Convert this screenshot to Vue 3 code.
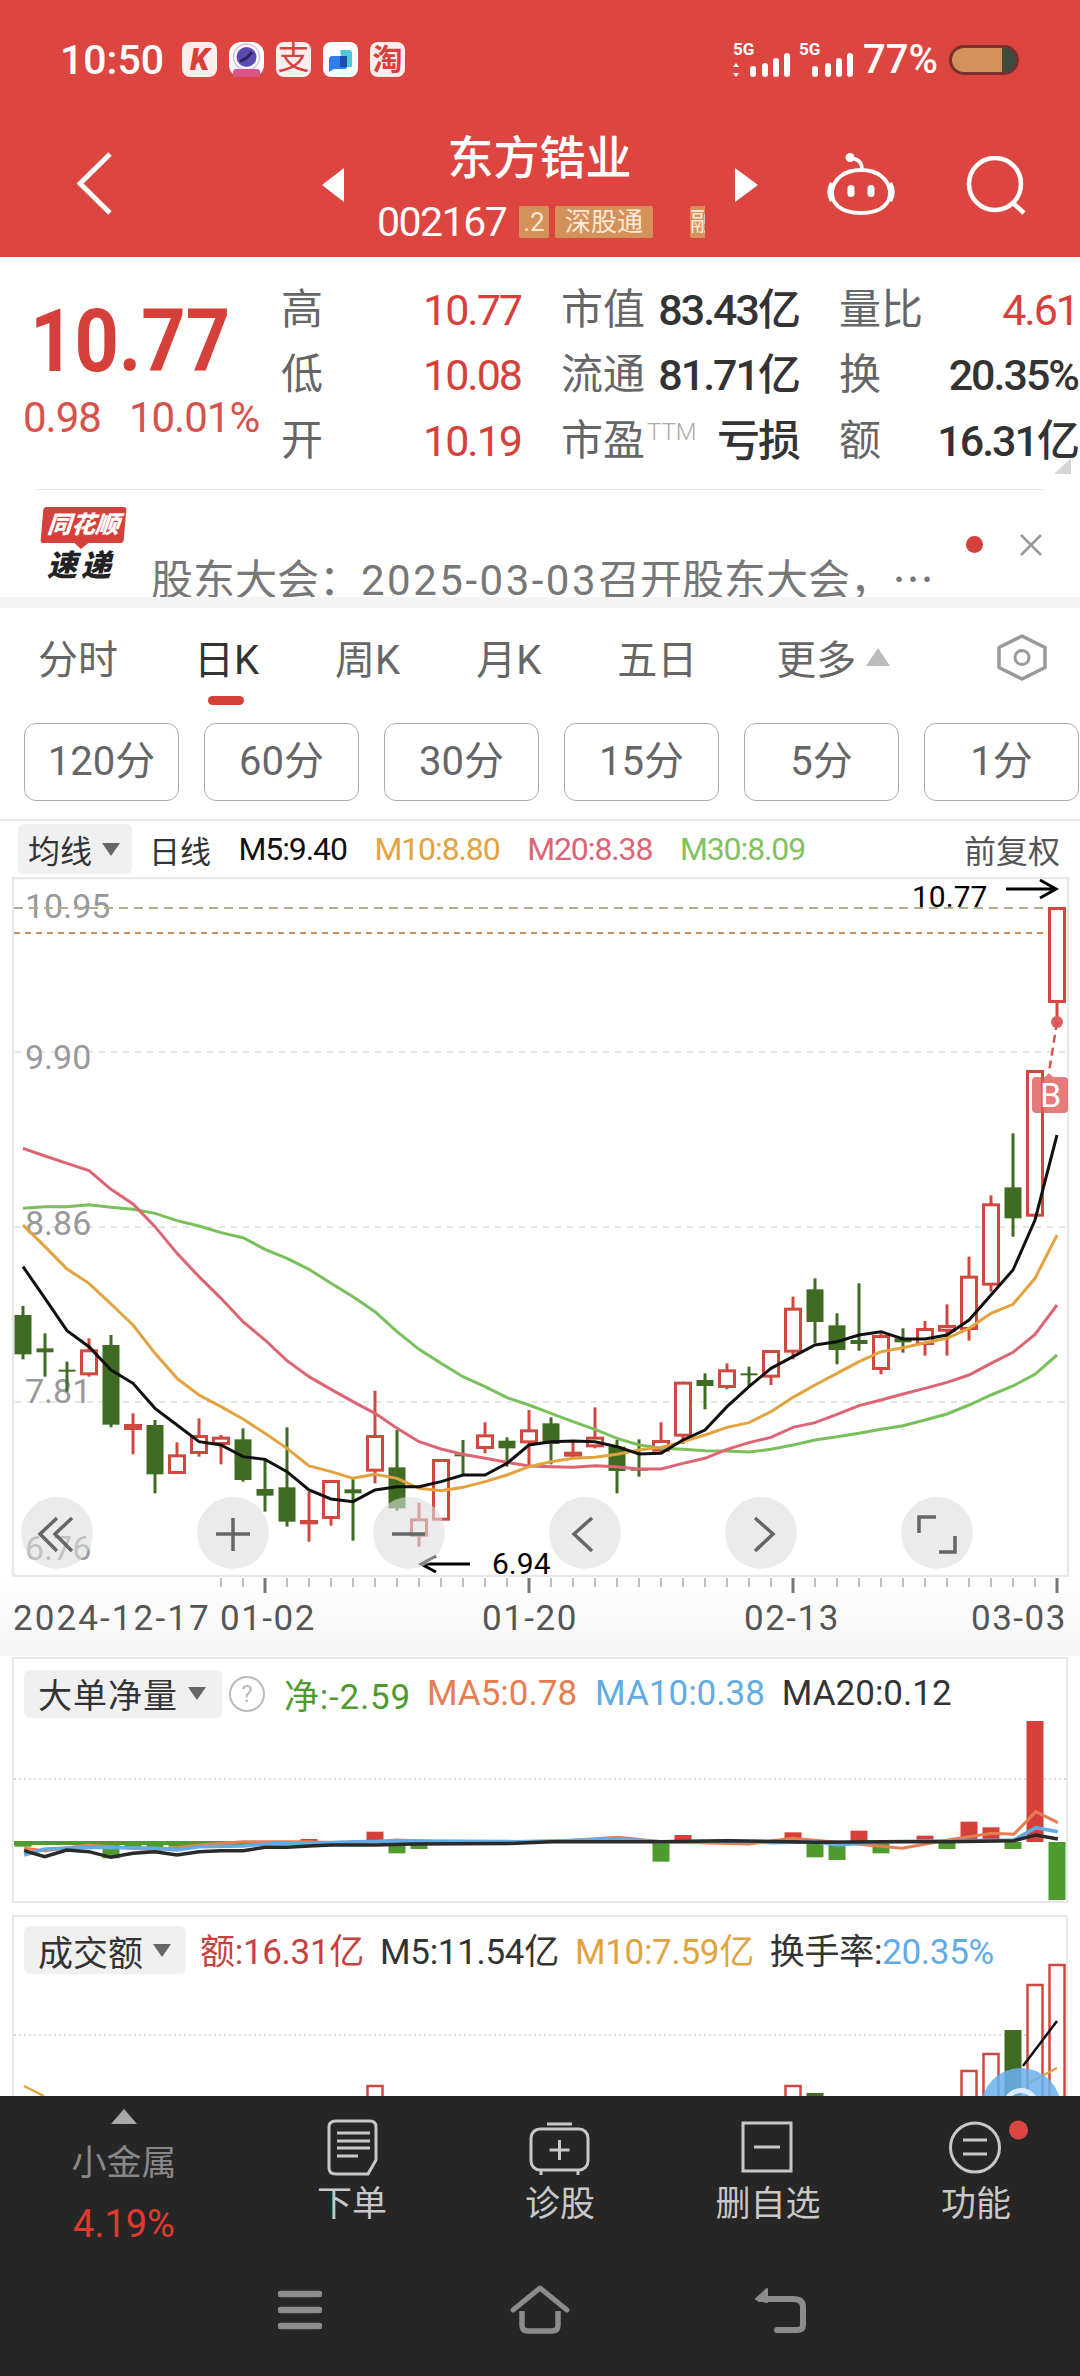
<template>
  <div class="page">
    <header class="top">
      <div class="status">
        <span class="clock">10:50</span>
        <div class="tiles">
          <span class="tile tile-k">K</span>
          <span class="tile tile-app">
            <svg width="35" height="35" viewBox="0 0 35 35">
              <circle cx="17.5" cy="15" r="13" fill="#fff" stroke="#c9c5e6" stroke-width="1.500" />
              <circle cx="17.5" cy="15" r="10" fill="#5f4bb0" />
              <path d="M11 19q6-1 12-9" fill="none" stroke="#2a2560" stroke-width="3" />
              <rect x="4" y="27" width="27" height="8" rx="3" fill="#d9558a" />
            </svg>
          </span>
          <span class="tile tile-zhi">支</span>
          <span class="tile tile-chat">
            <svg width="35" height="35" viewBox="0 0 35 35">
              <path d="M17 8h9q3 0 3 3v14h-9z" fill="#4fc8d8" />
              <path d="M9 14h12q3 0 3 3v8q0 2-3 2H11l-5 3V17q0-3 3-3z" fill="#2f7fee" />
              <path d="M17 14h7v11h-7z" fill="#1c4fa8" />
            </svg>
          </span>
          <span class="tile tile-tao">淘</span>
        </div>
        <div class="status-right">
          <svg class="signal signal-a" width="57" height="40" viewBox="0 0 57 40">
            <text class="five-g" x="0" y="17">5G</text>
            <path d="M3 25l-3 4h6zM3 39l-3-4h6z" fill="#fff" />
            <rect v-for="b in signalA" :key="b.x" :x="b.x" :y="39 - b.h" width="6" :height="b.h" rx="3" fill="#fff" />
          </svg>
          <svg class="signal signal-b" width="54" height="40" viewBox="0 0 54 40">
            <text class="five-g" x="0" y="17">5G</text>
            <rect v-for="b in signalB" :key="b.x" :x="b.x" :y="39 - b.h" width="6" :height="b.h" rx="3" fill="#fff" />
          </svg>
          <span class="percent">77%</span>
          <span class="battery"><i></i></span>
        </div>
      </div>
      <div class="nav">
        <svg class="back" width="35" height="63" viewBox="0 0 35 63">
          <path d="M33 2 3 31.5 33 61" fill="none" stroke="#fff" stroke-width="5" />
        </svg>
        <span class="arrow arrow-left"></span>
        <div class="stock">
          <div class="stock-name">东方锆业</div>
          <div class="stock-code">
            <span class="code">002167</span>
            <span class="chip chip-a">.2</span>
            <span class="chip chip-b">深股通</span>
            <span class="chip chip-c">融</span>
          </div>
        </div>
        <span class="arrow arrow-right"></span>
        <svg class="bot" width="70" height="63" viewBox="0 0 70 63">
          <circle cx="24" cy="4.500" r="4.500" fill="#fff" />
          <path d="M24 5q12 1 12 11" fill="none" stroke="#fff" stroke-width="3.500" />
          <path d="M35 17c17 0 27 9 29 21 1 12-8 22-29 22S5 50 6 38c2-12 12-21 29-21z" fill="none" stroke="#fff" stroke-width="4" />
          <path d="M6 30q-5 9 0 18M64 30q5 9 0 18" fill="none" stroke="#fff" stroke-width="4.500" />
          <rect x="21.500" y="32" width="7" height="12" rx="3.500" fill="#fff" />
          <rect x="41.500" y="32" width="7" height="12" rx="3.500" fill="#fff" />
        </svg>
        <svg class="search" width="62" height="60" viewBox="0 0 62 60">
          <circle cx="30" cy="28" r="26" fill="none" stroke="#fff" stroke-width="4.500" />
          <path d="M49 48l10 9" stroke="#fff" stroke-width="4.500" />
        </svg>
      </div>
    </header>

    <main class="main">
      <section class="quote">
        <div class="quote-price">
          <div class="price">10.77</div>
          <div class="change"><span>0.98</span><span>10.01%</span></div>
        </div>
        <div class="quote-grid">
          <template v-for="row in quoteRows" :key="row.label">
            <div class="cell">
              <span class="cell-label">{{ row.label }}</span>
              <span class="cell-value up">{{ row.value }}</span>
            </div>
            <div class="cell">
              <span class="cell-label">{{ row.label2 }}<sup v-if="row.ttm" class="ttm">TTM</sup></span>
              <span class="cell-value">{{ row.value2 }}</span>
            </div>
            <div class="cell">
              <span class="cell-label">{{ row.label3 }}</span>
              <span class="cell-value" :class="{ up: row.up3 }">{{ row.value3 }}</span>
            </div>
          </template>
        </div>
        <span class="corner"></span>
      </section>
      <div class="quote-line"></div>

      <section class="news">
        <div class="news-logo">
          <div class="logo-tag">同花顺</div>
          <div class="logo-sub">速递</div>
        </div>
        <div class="news-text">股东大会：<span class="news-date">2025-03-03</span>召开股东大会，⋯</div>
        <span class="news-dot"></span>
        <svg class="news-close" width="24" height="24" viewBox="0 0 24 24">
          <path d="M2 2l20 20M22 2 2 22" stroke="#999" stroke-width="2.5" />
        </svg>
      </section>
      <div class="band"></div>

      <nav class="tabs">
        <span v-for="tab in tabs" :key="tab" class="tab" :class="{ active: tab === '日K' }">{{ tab }}</span>
        <span class="tab-more"></span>
        <svg class="hex" width="50" height="47" viewBox="0 0 50 47">
          <path d="M25 2 48 13.500V33.500L25 45 2 33.500V13.500z" fill="none" stroke="#999" stroke-width="3.500" stroke-linejoin="round" />
          <circle cx="25" cy="23.500" r="7" fill="none" stroke="#999" stroke-width="3" />
        </svg>
      </nav>
      <div class="periods">
        <span v-for="p in periods" :key="p" class="period">{{ p }}</span>
      </div>

      <div class="ma-row">
        <span class="picker picker-ma">均线<i></i></span>
        <span class="ma-day">日线</span>
        <span class="ma-item">M5:9.40</span>
        <span class="ma-item c-orange">M10:8.80</span>
        <span class="ma-item c-pink">M20:8.38</span>
        <span class="ma-item c-green">M30:8.09</span>
        <span class="ma-adjust">前复权</span>
      </div>

      <div class="kline">
        <svg class="kline-svg" width="1080" height="700" viewBox="0 877 1080 700">
          <rect x="13" y="878" width="1055" height="698" fill="none" stroke="#e8e8e8" stroke-width="2.500" />
          <line v-for="y in gridY" :key="y" x1="15" x2="1066" :y1="y" :y2="y" class="grid-line" />
          <text v-for="l in priceLabels" :key="l.t" x="25" :y="l.y" class="price-label">{{ l.t }}</text>
          <line x1="14" x2="1048" y1="908" y2="908" class="line-high" />
          <line x1="14" x2="1066" y1="933" y2="933" class="line-cost" />

          <g v-for="c in candleShapes" :key="c.x">
            <line :x1="c.x" :x2="c.x" :y1="c.wickTop" :y2="c.wickBot" :stroke="c.color" stroke-width="3" />
            <rect v-if="c.up" :x="c.x - 7.5" :y="c.top + 1.5" width="15" :height="Math.max(c.bot - c.top - 3, 1)" fill="#fff" :stroke="c.color" stroke-width="3" />
            <rect v-else :x="c.x - 8.5" :y="c.top" width="17" :height="Math.max(c.bot - c.top, 2)" :fill="c.color" />
          </g>

          <polyline :points="maLines.green" fill="none" stroke="#79bf5c" stroke-width="3" />
          <polyline :points="maLines.pink" fill="none" stroke="#de6474" stroke-width="3" />
          <polyline :points="maLines.orange" fill="none" stroke="#e2a33f" stroke-width="3" />
          <polyline :points="maLines.black" fill="none" stroke="#111" stroke-width="3" />

          <text x="912" y="907" class="mark">10.77</text>
          <path d="M1006 889h50M1040 880l16 9-16 9" fill="none" stroke="#000" stroke-width="3" />
          <text x="492" y="1574" class="mark">6.94</text>
          <path d="M470 1564h-49M436 1556l-15 8 15 8" fill="none" stroke="#000" stroke-width="3" />

          <circle cx="1057" cy="1022" r="6" fill="#dd6060" />
          <line x1="1057" y1="1022" x2="1049" y2="1072" stroke="#d9534f" stroke-width="2.500" stroke-dasharray="8 5" />
          <path d="M1036 1077h9l4-4 4 4h11q4 0 4 4v28q0 4-4 4h-28q-4 0-4-4v-28q0-4 4-4z" fill="#e05a5a" opacity="0.8" />
          <text x="1040" y="1107" class="buy-mark">B</text>
        </svg>
        <div class="chart-btns">
          <span v-for="b in chartButtons" :key="b" class="chart-btn">
            <svg width="72" height="72" viewBox="0 0 72 72">
              <path :d="b" fill="none" stroke="#666" stroke-width="3.500" />
            </svg>
          </span>
        </div>
      </div>

      <div class="date-axis">
        <svg width="1080" height="79" viewBox="0 1577 1080 79">
          <line v-for="t in axisTicks" :key="t.x" :x1="t.x" :x2="t.x" y1="1578" :y2="t.y" :stroke="t.c" :stroke-width="t.w" />
          <text v-for="d in axisDates" :key="d.t" :x="d.x" y="1630" class="axis-date" :class="{ 'axis-date-full': d.t.length > 5 }">{{ d.t }}</text>
        </svg>
      </div>

      <section class="panel panel-big">
        <div class="panel-head panel-head-big">
          <span class="picker picker-big">大单净量<i></i></span>
          <span class="help">?</span>
          <span class="stat stat-net">净:-2.59</span>
          <span class="stat stat-ma5">MA5:0.78</span>
          <span class="stat stat-ma10">MA10:0.38</span>
          <span class="stat stat-ma20">MA20:0.12</span>
        </div>
        <svg class="panel-svg" width="1052" height="180" viewBox="14 1720 1052 180">
          <line x1="14" x2="1066" y1="1779" y2="1779" class="dot-line" />
          <rect x="14" y="1841" width="250" height="4" fill="#4f9b2f" />
          <rect v-for="b in bigBars" :key="b.x" :x="b.x - 8.5" :y="b.y" width="17" :height="b.h" :fill="b.c" />
          <polyline :points="bigLines.orange" fill="none" stroke="#e87d50" stroke-width="3" />
          <polyline :points="bigLines.blue" fill="none" stroke="#62abe4" stroke-width="3.500" />
          <polyline :points="bigLines.dark" fill="none" stroke="#2a2a2a" stroke-width="3.500" />
        </svg>
      </section>

      <section class="panel panel-amount">
        <div class="panel-head panel-head-amount">
          <span class="picker picker-amount">成交额<i></i></span>
          <span class="stat stat-amount">额:16.31亿</span>
          <span class="stat">M5:11.54亿</span>
          <span class="stat c-orange">M10:7.59亿</span>
          <span class="stat">换手率:<b class="c-blue">20.35%</b></span>
        </div>
        <svg class="panel-svg amount-svg" width="1052" height="121" viewBox="14 1976 1052 121">
          <line x1="14" x2="1066" y1="2037" y2="2037" class="dot-line" />
          <template v-for="b in amountBars" :key="b.x">
            <rect v-if="b.up" :x="b.x - 7.5" :y="b.y" width="15" :height="2100 - b.y" fill="#fff" stroke="#d0483f" stroke-width="2.500" />
            <rect v-else :x="b.x - 8.5" :y="b.y" width="17" :height="2100 - b.y" fill="#3f6b22" />
          </template>
          <path d="M24 2088l20 10" fill="none" stroke="#e2a33f" stroke-width="2.500" />
          <path d="M1025 2087l32-17" fill="none" stroke="#e2a33f" stroke-width="2.500" />
          <path d="M1023 2068l34-45" fill="none" stroke="#111" stroke-width="2.500" />
        </svg>
      </section>

      <div class="float-ball"><i></i></div>
    </main>

    <footer class="bottom">
      <div class="actions">
        <div class="action action-sector">
          <span class="sector-up"></span>
          <span class="sector-name">小金属</span>
          <span class="sector-rate">4.19%</span>
        </div>
        <div class="action">
          <svg class="action-icon" width="80" height="60" viewBox="0 0 80 60">
            <path d="M24 3h34q6 0 6 6v33l-8 14H24q-7 0-7-6V9q0-6 7-6z" />
            <path d="M25 15h33M25 23h33M25 30h33M25 38h21" />
          </svg>
          <span class="action-label">下单</span>
        </div>
        <div class="action">
          <svg class="action-icon" width="80" height="60" viewBox="0 0 80 60">
            <path d="M27 6h25" />
            <rect x="11" y="11" width="57" height="41" rx="9" />
            <path d="M39.500 22v20M29.500 32h20M21 52v5M58 52v5" />
          </svg>
          <span class="action-label">诊股</span>
        </div>
        <div class="action">
          <svg class="action-icon" width="80" height="60" viewBox="0 0 80 60">
            <rect x="15" y="5" width="48" height="48" />
            <path d="M26 29h26" />
          </svg>
          <span class="action-label">删自选</span>
        </div>
        <div class="action">
          <svg class="action-icon icon-open" width="80" height="60" viewBox="0 0 80 60">
            <circle cx="39" cy="29.500" r="24.500" />
            <path d="M27 22h24M27 36h24" />
            <circle class="icon-dot" cx="82.500" cy="12" r="9.500" />
          </svg>
          <span class="action-label">功能</span>
        </div>
      </div>
      <div class="sys-nav">
        <svg width="60" height="50" viewBox="0 0 60 50">
          <path d="M11 9h38M11 25h38M11 41h38" stroke="#8c8c8c" stroke-width="6.500" stroke-linecap="round" />
        </svg>
        <svg width="60" height="50" viewBox="0 0 60 50">
          <path d="M3 25 30 3l27 22" fill="none" stroke="#8c8c8c" stroke-width="5" stroke-linecap="round" stroke-linejoin="round" />
          <path d="M12 26v14q0 6 6 6h24q6 0 6-6V26" fill="none" stroke="#8c8c8c" stroke-width="5.500" />
        </svg>
        <svg width="60" height="50" viewBox="0 0 60 50">
          <path d="M10 14h33q10 0 10 8v18q0 5-6 5H27" fill="none" stroke="#8c8c8c" stroke-width="6" stroke-linecap="round" />
          <path d="M17 4 6 14l11 3z" fill="#8c8c8c" stroke="#8c8c8c" stroke-width="2" stroke-linejoin="round" />
        </svg>
      </div>
    </footer>
  </div>
</template>

<script setup>
const signalA = [
  { x: 17, h: 11 },
  { x: 29, h: 14 },
  { x: 40, h: 19 },
  { x: 51, h: 24 }
]
const signalB = [
  { x: 13, h: 11 },
  { x: 26, h: 14 },
  { x: 37, h: 19 },
  { x: 48, h: 24 }
]

const quoteRows = [
  { label: '高', value: '10.77', label2: '市值', value2: '83.43亿', label3: '量比', value3: '4.61', up3: true },
  { label: '低', value: '10.08', label2: '流通', value2: '81.71亿', label3: '换', value3: '20.35%' },
  { label: '开', value: '10.19', label2: '市盈', ttm: true, value2: '亏损', label3: '额', value3: '16.31亿' }
]

const tabs = ['分时', '日K', '周K', '月K', '五日', '更多']
const periods = ['120分', '60分', '30分', '15分', '5分', '1分']

const RED = '#d0483f'
const GREEN = '#3f6b22'
const X = (i) => 23 + 22 * i
const Y = (z) => 1120 + z / 3

// r/g, body top, body bottom, wick top, wick bottom, read off the chart
const candles = [
  ['g', 585, 703, 558, 718], ['g', 685, 697, 640, 770], ['g', 749, 755, 725, 815], ['r', 688, 766, 655, 770],
  ['g', 675, 914, 645, 922], ['r', 912, 930, 880, 1003], ['g', 915, 1063, 900, 1120], ['r', 1003, 1062, 967, 1062],
  ['r', 945, 1002, 895, 1010], ['r', 950, 975, 945, 1033], ['g', 958, 1080, 925, 1085], ['g', 1107, 1127, 1018, 1175],
  ['g', 1102, 1205, 922, 1220], ['r', 1200, 1213, 1115, 1265], ['r', 1080, 1197, 1080, 1217], ['g', 1108, 1120, 1075, 1262],
  ['r', 945, 1055, 812, 1090], ['g', 1042, 1165, 930, 1172], ['r', 1195, 1250, 1148, 1280], ['r', 1017, 1202, 1017, 1202],
  ['g', 1003, 1009, 960, 1065], ['r', 943, 987, 907, 1000], ['g', 962, 985, 952, 1040], ['r', 928, 970, 870, 1040],
  ['g', 910, 972, 892, 1033], ['r', 995, 1010, 965, 1015], ['r', 950, 982, 862, 985], ['g', 980, 1053, 960, 1120],
  ['g', 1045, 1052, 958, 1070], ['r', 960, 995, 907, 998], ['r', 785, 950, 785, 972], ['g', 780, 798, 760, 868],
  ['r', 748, 804, 730, 808], ['g', 760, 765, 740, 800], ['r', 690, 773, 690, 795], ['r', 563, 698, 530, 718],
  ['g', 508, 606, 475, 670], ['g', 616, 690, 580, 733], ['g', 660, 672, 490, 692], ['r', 645, 750, 640, 763],
  ['g', 655, 667, 625, 698], ['r', 624, 675, 603, 707], ['r', 615, 635, 553, 707], ['r', 467, 630, 410, 662],
  ['r', 250, 497, 226, 515], ['g', 202, 295, 40, 350], ['r', -150, 290, -150, 290], ['r', -639, -351, -639, -294]
]

const candleShapes = candles.map((c, i) => ({
  x: X(i),
  up: c[0] === 'r',
  color: c[0] === 'r' ? RED : GREEN,
  top: Y(c[1]),
  bot: Y(c[2]),
  wickTop: Y(c[3]),
  wickBot: Y(c[4])
}))

const toLine = (ys) => ys.map((z, i) => `${X(i)},${Y(z)}`).join(' ')

const maLines = {
  black: toLine([440, 535, 632, 680, 750, 790, 865, 915, 965, 975, 1010, 1018, 1055, 1110, 1137, 1145, 1110, 1100, 1100, 1085, 1065, 1065, 1030, 975, 965, 963, 965, 980, 1002, 1000, 960, 930, 860, 800, 745, 710, 675, 665, 645, 635, 657, 657, 645, 600, 525, 450, 300, 45]),
  orange: toLine([315, 380, 447, 490, 552, 615, 700, 775, 825, 860, 897, 940, 985, 1038, 1055, 1075, 1063, 1075, 1105, 1112, 1102, 1085, 1065, 1040, 1025, 1015, 1012, 1003, 990, 982, 965, 945, 922, 908, 875, 832, 795, 760, 725, 695, 683, 668, 655, 625, 580, 553, 475, 345]),
  pink: toLine([85, 108, 130, 152, 208, 252, 320, 400, 470, 535, 605, 660, 722, 770, 808, 845, 880, 925, 965, 987, 1003, 1015, 1027, 1038, 1040, 1042, 1037, 1040, 1047, 1047, 1030, 1015, 988, 968, 952, 922, 908, 883, 857, 840, 822, 805, 787, 765, 730, 697, 643, 555]),
  green: toLine([265, 260, 260, 254, 262, 268, 280, 302, 318, 338, 353, 388, 415, 448, 490, 530, 575, 635, 688, 730, 770, 800, 833, 855, 880, 905, 928, 955, 975, 985, 988, 992, 993, 996, 988, 975, 960, 950, 940, 928, 917, 900, 882, 855, 825, 798, 763, 705])
}

const gridY = [1052, 1227, 1402]
const priceLabels = [
  { t: '10.95', y: 918 },
  { t: '9.90', y: 1069 },
  { t: '8.86', y: 1235 },
  { t: '7.81', y: 1403 },
  { t: '6.76', y: 1560 }
]

const chartButtons = [
  'M36 21 19 37l17 17M51 21 34 37l17 17',
  'M19 37h34M36 21v33',
  'M19 37h33',
  'M43 21 25 37l18 17',
  'M30 21l18 16-18 17',
  'M18 36V20h17M38 55h16V39'
]

const axisTicks = []
for (let i = 9; i < 48; i++) {
  const major = (i - 11) % 12 === 0
  axisTicks.push({ x: X(i), y: major ? 1593 : 1587, w: major ? 3 : 1.5, c: major ? '#777' : '#aaa' })
}
const axisDates = [
  { t: '2024-12-17', x: 13 },
  { t: '01-02', x: 220 },
  { t: '01-20', x: 482 },
  { t: '02-13', x: 744 },
  { t: '03-03', x: 971 }
]

// big order panel: index -> top or bottom edge in the zoomed picture
const PANEL_Y = (z) => 1640 + z / 3
const BASE = 1842
const bigRaw = {
  0: 620, 2: 610, 3: 615, 4: 655, 5: 625, 6: 625, 7: 620, 8: 612, 13: 597, 16: 575, 17: 640, 18: 627,
  23: 600, 26: 597, 29: 665, 30: 585, 35: 577, 36: 652, 37: 660, 38: 572, 39: 640, 41: 587, 42: 627,
  43: 545, 44: 562, 45: 627, 46: 243, 47: 782
}
const bigBars = Object.entries(bigRaw).map(([i, z]) => {
  const y = PANEL_Y(z)
  return y < BASE
    ? { x: X(+i), y, h: BASE - y, c: '#d5403a' }
    : { x: X(+i), y: BASE, h: y - BASE, c: '#4f9b2f' }
})

const toPanelLine = (pts) => pts.map(([x, z]) => `${x / 1.452},${PANEL_Y(z)}`).join(' ')
const bigLines = {
  dark: toPanelLine([[35, 632], [65, 650], [97, 630], [129, 635], [161, 652], [193, 640], [225, 635], [257, 645], [289, 635], [321, 632], [353, 632], [385, 622], [417, 622], [449, 618], [481, 615], [545, 615], [600, 612], [750, 610], [800, 605], [960, 605], [1056, 602], [1184, 607], [1280, 605], [1376, 605], [1472, 602], [1504, 585], [1536, 597]]),
  blue: toPanelLine([[35, 645], [65, 627], [129, 622], [225, 625], [257, 630], [289, 620], [353, 618], [385, 612], [449, 610], [513, 605], [608, 603], [750, 605], [900, 598], [960, 605], [1056, 603], [1120, 608], [1184, 605], [1216, 615], [1280, 605], [1376, 602], [1472, 600], [1504, 563], [1536, 575]]),
  orange: toPanelLine([[35, 625], [65, 632], [129, 615], [225, 630], [289, 615], [353, 605], [449, 605], [513, 610], [576, 600], [640, 605], [800, 605], [897, 592], [960, 605], [1088, 612], [1150, 595], [1216, 607], [1310, 625], [1376, 600], [1440, 580], [1472, 583], [1504, 515], [1536, 548]])
}

const amountBars = [
  { x: X(16), y: 2088, up: true },
  { x: X(35), y: 2088, up: true },
  { x: X(36), y: 2095 },
  { x: X(43), y: 2073, up: true },
  { x: X(44), y: 2056, up: true },
  { x: X(45), y: 2032 },
  { x: X(46), y: 1987, up: true },
  { x: X(47), y: 1967, up: true }
]
</script>

<style>
html,
body {
  margin: 0;
  background: #fff;
}
</style>

<style scoped>
.page {
  width: 1080px;
  height: 2376px;
  overflow: hidden;
  display: flex;
  flex-direction: column;
  background: #fff;
  font-family: Roboto, 'Noto Sans CJK SC', sans-serif;
  color: #333;
}

/* header */
.top {
  height: 257px;
  flex: none;
  background: #dd4541;
  color: #fff;
}
.status {
  height: 120px;
  box-sizing: border-box;
  padding: 42px 0 0 60px;
  display: flex;
  align-items: flex-start;
}
.clock {
  width: 122px;
  font-size: 41px;
  line-height: 36px;
  font-weight: 500;
}
.tiles {
  display: flex;
  gap: 12px;
}
.tile {
  width: 35px;
  height: 35px;
  border-radius: 8px;
  background: #fdeeee;
  color: #d9403a;
  font-size: 30px;
  line-height: 35px;
  text-align: center;
}
.tile-k {
  font-weight: 900;
  font-style: italic;
  font-size: 31px;
}
.tile-zhi {
  font-size: 32px;
  line-height: 33px;
}
.tile-tao {
  font-weight: 700;
}
.tile-app {
  background: #fff;
  border-radius: 12px;
}
.tile-chat {
  background: #fff;
}
.status-right {
  margin-left: auto;
  padding-right: 61px;
  display: flex;
  align-items: flex-start;
}
.signal {
  margin-top: -4px;
}
.signal-a {
  margin-right: 9px;
}
.signal-b {
  margin-right: 10px;
}
.five-g {
  font-size: 17px;
  font-weight: 700;
  fill: #fff;
}
.percent {
  width: 86px;
  font-size: 40px;
  line-height: 36px;
  font-weight: 500;
}
.battery {
  width: 70px;
  height: 30px;
  margin-top: 3px;
  box-sizing: border-box;
  border: 3px solid #7a2f30;
  border-radius: 15px;
  background: #3f4a43;
  overflow: hidden;
}
.battery i {
  display: block;
  width: 50px;
  height: 100%;
  background: #d4915a;
}
.nav {
  height: 137px;
  display: flex;
  align-items: flex-start;
  position: relative;
}
.back {
  margin: 32px 0 0 77px;
}
.arrow {
  width: 0;
  height: 0;
  margin-top: 48px;
  border-top: 17.5px solid transparent;
  border-bottom: 17.5px solid transparent;
}
.arrow-left {
  margin-left: 210px;
  border-right: 22px solid #fff;
}
.arrow-right {
  border-left: 23px solid #fff;
}
.stock {
  width: 391px;
}
.stock-name {
  margin-top: 8px;
  height: 60px;
  line-height: 60px;
  text-align: center;
  font-size: 46px;
  font-weight: 500;
}
.stock-code {
  margin: 16px 0 0 33px;
  width: 328px;
  height: 36px;
  display: flex;
  align-items: center;
  overflow-x: clip;
  white-space: nowrap;
}
.code {
  width: 142px;
  font-size: 41px;
  line-height: 36px;
  letter-spacing: -1.5px;
  flex: none;
}
.chip {
  height: 32px;
  line-height: 32px;
  border-radius: 2px;
  background: #d4915a;
  color: #fbe9d8;
  font-size: 26px;
  text-align: center;
  flex: none;
}
.chip-a {
  width: 30px;
}
.chip-b {
  width: 98px;
  margin-left: 6px;
}
.chip-c {
  width: 98px;
  margin-left: 37px;
  text-align: left;
}
.bot {
  margin: 33px 0 0 68px;
}
.search {
  margin: 36px 0 0 69px;
}

/* quote */
.main {
  flex: none;
  height: 1839px;
  overflow: hidden;
  position: relative;
}
.quote {
  height: 232px;
  display: flex;
  position: relative;
  box-sizing: border-box;
  padding-top: 20px;
}
.quote-price {
  width: 281px;
  flex: none;
  box-sizing: border-box;
  padding: 22px 0 0 23px;
  color: #d6403a;
}
.price {
  width: 230px;
  margin-left: 7px;
  font-size: 88px;
  line-height: 84px;
  font-weight: 700;
  transform: scaleX(0.88);
  transform-origin: left center;
}
.change {
  margin-top: 15px;
  display: flex;
  font-size: 42px;
  line-height: 40px;
  letter-spacing: -1px;
  color: #d6524a;
}
.change span + span {
  margin-left: 28px;
}
.quote-grid {
  display: grid;
  grid-template-columns: 240px 238px 239px;
  grid-auto-rows: 65.5px;
  column-gap: 40px;
}
.cell {
  display: flex;
  justify-content: space-between;
  align-items: center;
  white-space: nowrap;
}
.cell-label {
  font-size: 42px;
  line-height: 50px;
  color: #666;
  display: flex;
  align-items: flex-start;
}
.ttm {
  font-size: 24px;
  line-height: 32px;
  color: #aaa;
  font-weight: 300;
  margin-left: 2px;
}
.cell-value {
  font-size: 43px;
  line-height: 50px;
  letter-spacing: -2px;
  font-weight: 500;
  color: #333;
}
.cell-value.up {
  color: #d6403a;
  font-weight: 400;
}
.corner {
  position: absolute;
  right: 9px;
  top: 201px;
  width: 0;
  height: 0;
  border-left: 17px solid transparent;
  border-bottom: 16px solid #d5d5d5;
}
.quote-line {
  height: 1px;
  margin: 0 37px;
  background: #e8e8e8;
}
.news {
  height: 107px;
  display: flex;
  align-items: flex-start;
  overflow: hidden;
}
.news-logo {
  width: 86px;
  margin: 17px 0 0 38px;
  flex: none;
}
.logo-tag {
  width: 83px;
  height: 36px;
  margin-left: 4px;
  border-radius: 3px;
  background: #d6403a;
  color: #fff;
  font-size: 24px;
  line-height: 36px;
  font-weight: 900;
  font-style: italic;
  text-align: center;
  transform: skewX(-5deg);
  position: relative;
}
.logo-tag::after {
  content: '';
  position: absolute;
  left: 34px;
  bottom: -6px;
  border-left: 7px solid transparent;
  border-right: 7px solid transparent;
  border-top: 6px solid #d6403a;
}
.logo-sub {
  margin-top: 9px;
  padding-left: 9px;
  color: #222;
  font-size: 30px;
  line-height: 28px;
  font-weight: 900;
  font-style: italic;
  letter-spacing: 4px;
}
.news-text {
  width: 780px;
  margin: 66px 0 0 27px;
  flex: none;
  font-size: 42px;
  line-height: 50px;
  color: #777;
  white-space: nowrap;
}
.news-date {
  letter-spacing: 2.5px;
}
.news-dot {
  width: 17px;
  height: 17px;
  margin: 46px 0 0 35px;
  flex: none;
  border-radius: 50%;
  background: #d6403a;
}
.news-close {
  margin: 43px 0 0 36px;
  flex: none;
}
.band {
  height: 11px;
  background: #f4f4f4;
}

/* tabs */
.tabs {
  height: 115px;
  box-sizing: border-box;
  padding: 28px 33px 0 38px;
  display: flex;
  align-items: flex-start;
  gap: 76px;
}
.tab {
  position: relative;
  font-size: 40px;
  line-height: 50px;
  color: #666;
}
.tab:nth-child(6) {
  margin-left: 3px;
}
.tab.active {
  color: #333;
}
.tab.active::after {
  content: '';
  position: absolute;
  left: 14px;
  top: 60px;
  width: 36px;
  height: 9px;
  border-radius: 5px;
  background: #d6403a;
}
.tab-more {
  width: 0;
  height: 0;
  margin: 12px 0 0 -66px;
  border-left: 12px solid transparent;
  border-right: 12px solid transparent;
  border-bottom: 18px solid #bbb;
}
.hex {
  margin: -2px 0 0 auto;
}
.periods {
  height: 78px;
  padding-left: 24px;
  display: flex;
  gap: 25px;
}
.period {
  width: 155px;
  height: 78px;
  flex: none;
  box-sizing: border-box;
  border: 1.5px solid #aaa;
  border-radius: 12px;
  color: #666;
  font-size: 40px;
  line-height: 75px;
  text-align: center;
}

/* moving average row */
.ma-row {
  margin-top: 18px;
  height: 58px;
  box-sizing: border-box;
  border-top: 2px solid #e8e8e8;
  padding: 2px 20px 2px 18px;
  display: flex;
  align-items: center;
  gap: 27.5px;
  font-size: 32px;
  color: #111;
  white-space: nowrap;
}
.picker {
  flex: none;
  box-sizing: border-box;
  border-radius: 6px;
  background: #f0f0f0;
  color: #333;
  display: flex;
  align-items: center;
}
.picker i {
  width: 0;
  height: 0;
  margin-left: 10px;
  border-left: 9px solid transparent;
  border-right: 9px solid transparent;
  border-top: 13px solid #666;
}
.picker-ma {
  width: 114px;
  height: 50px;
  padding-left: 10px;
  font-size: 32px;
}
.ma-day {
  margin-left: -10.5px;
  font-size: 31px;
  color: #333;
}
.ma-item {
  letter-spacing: -1.1px;
}
.ma-adjust {
  margin-left: auto;
  font-size: 32px;
  color: #555;
}
.c-orange {
  color: #e2a33f;
}
.c-pink {
  color: #de6474;
}
.c-green {
  color: #82c160;
}
.c-blue {
  color: #62abe4;
  font-weight: 400;
}

/* candle chart */
.kline {
  height: 700px;
  position: relative;
}
.kline-svg {
  display: block;
}
.grid-line {
  stroke: #ddd;
  stroke-width: 1.5;
  stroke-dasharray: 6 6;
}
.line-high {
  stroke: #b8ab8a;
  stroke-width: 2;
  stroke-dasharray: 9 6;
}
.line-cost {
  stroke: #c89060;
  stroke-width: 2;
  stroke-dasharray: 6 5;
}
.price-label {
  font-size: 34px;
  fill: #999;
}
.mark {
  font-size: 30px;
  fill: #000;
}
.buy-mark {
  font-size: 34px;
  fill: #fff;
}
.chart-btns {
  position: absolute;
  left: 21px;
  top: 620px;
  display: flex;
  gap: 104px;
}
.chart-btn {
  width: 72px;
  height: 72px;
  border-radius: 50%;
  background: rgba(222, 222, 222, 0.6);
}
.date-axis {
  height: 79px;
  background: linear-gradient(#fff, #f4f4f4);
}
.date-axis svg {
  display: block;
}
.axis-date {
  font-size: 35px;
  fill: #555;
  letter-spacing: 1.5px;
}
.axis-date-full {
  letter-spacing: 2.1px;
}

/* lower panels */
.panel {
  margin: 0 12px;
  box-sizing: border-box;
  border: 2px solid #e8e8e8;
  position: relative;
}
.panel-big {
  height: 246px;
  margin-top: 1px;
}
.panel-amount {
  margin-top: 12px;
  height: 200px;
  border-bottom: none;
}
.panel-head {
  display: flex;
  align-items: center;
  white-space: nowrap;
  font-size: 35px;
  color: #333;
}
.panel-head-big {
  padding: 8px 0 0 10px;
  height: 53px;
}
.panel-head-amount {
  height: 48px;
  padding: 9px 0 0 10px;
  gap: 16px;
}
.panel-head-amount .stat {
  margin-bottom: 4px;
  letter-spacing: -0.3px;
}
.picker-big {
  width: 198px;
  height: 48px;
  padding-left: 14px;
  font-size: 34px;
  letter-spacing: 1px;
}
.picker-amount {
  width: 162px;
  height: 48px;
  margin-right: -2px;
  padding-left: 14px;
  font-size: 35px;
}
.help {
  width: 36px;
  height: 36px;
  margin: 0 19px 0 7px;
  box-sizing: border-box;
  border: 2px solid #bbb;
  border-radius: 50%;
  color: #bbb;
  font-size: 24px;
  line-height: 32px;
  text-align: center;
}
.stat {
  font-size: 35px;
}
.stat-net {
  color: #4f9b2f;
  margin-right: 16px;
  word-spacing: 0;
  letter-spacing: 0.8px;
}
.stat-ma5 {
  color: #e87d50;
  margin-right: 18px;
}
.stat-ma10 {
  color: #62abe4;
  margin-right: 17px;
}
.stat-amount {
  color: #c84040;
}
.panel-svg {
  display: block;
}
.amount-svg {
  overflow: visible;
}
.dot-line {
  stroke: #ddd;
  stroke-width: 2;
  stroke-dasharray: 2 3;
}
.float-ball {
  position: absolute;
  left: 981px;
  top: 1811px;
  width: 80px;
  height: 80px;
  border-radius: 50%;
  background: rgba(104, 176, 240, 0.85);
}
.float-ball i {
  display: block;
  width: 36px;
  height: 36px;
  margin: 20px auto 0;
  box-sizing: border-box;
  border: 5px solid #dcecfb;
  border-radius: 50%;
}

/* bottom bar */
.bottom {
  flex: 1;
  background: #262626;
}
.actions {
  height: 175px;
  display: grid;
  grid-template-columns: 248px repeat(4, 208px);
}
.action {
  padding-top: 22px;
  display: flex;
  flex-direction: column;
  align-items: center;
}
.action-icon {
  fill: none;
  stroke: #c8c8c8;
  stroke-width: 3;
  overflow: visible;
}
.icon-dot {
  fill: #dd4541;
  stroke: none;
}
.action-label {
  margin-top: 5px;
  font-size: 35px;
  line-height: 44px;
  color: #c8c8c8;
  white-space: nowrap;
}
.action-sector {
  padding-top: 13px;
}
.sector-up {
  width: 0;
  height: 0;
  border-left: 13px solid transparent;
  border-right: 13px solid transparent;
  border-bottom: 15px solid #aaa;
}
.sector-name {
  margin-top: 18px;
  font-size: 35px;
  line-height: 44px;
  color: #888;
}
.sector-rate {
  margin-top: 16px;
  font-size: 38px;
  line-height: 44px;
  color: #e03a2e;
}
.sys-nav {
  padding: 14px 0 0 270px;
  display: flex;
  gap: 180px;
}
</style>
